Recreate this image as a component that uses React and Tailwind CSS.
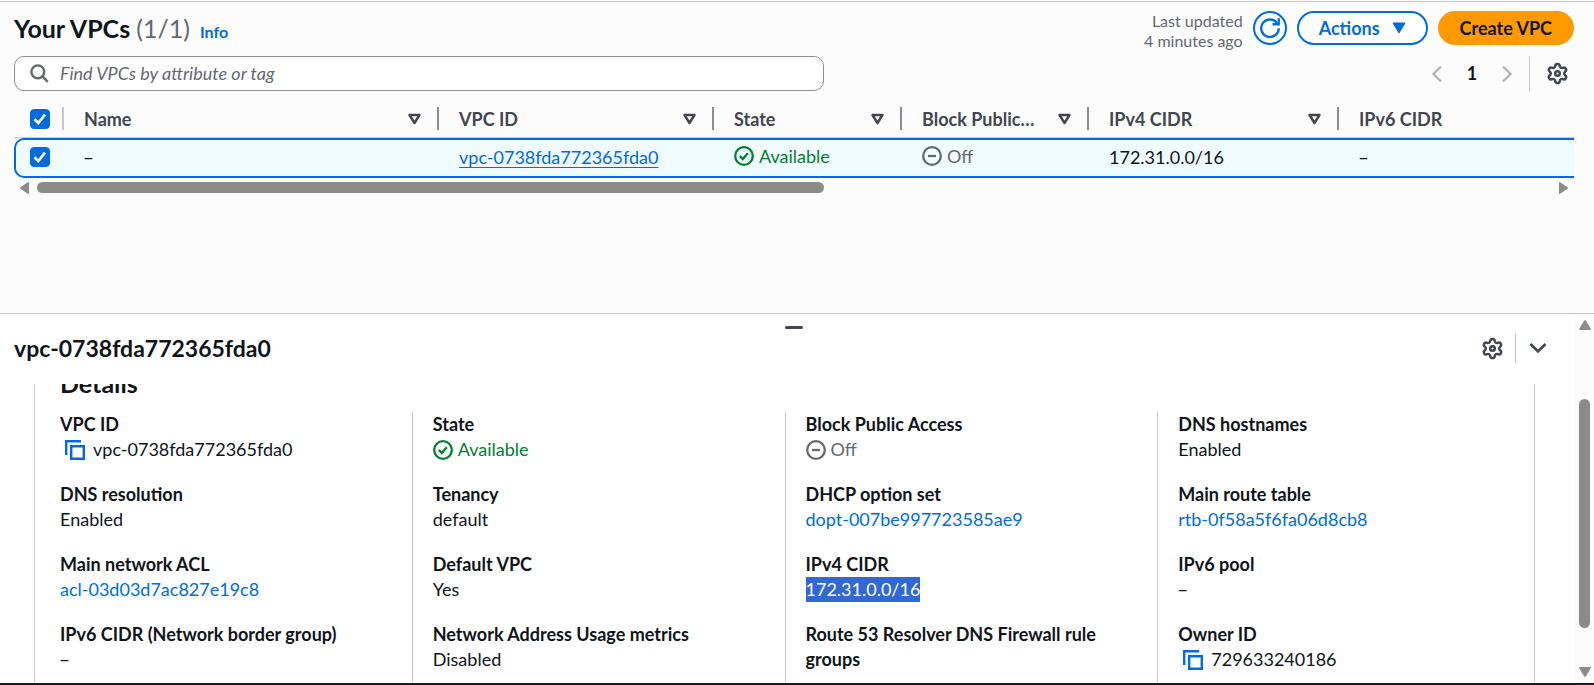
const link = "text-[#006ce0]";

function Tick({ id, label }) {
  return (
    <label htmlFor={id} className="relative block size-5">
      <input
        id={id}
        type="checkbox"
        aria-label={label}
        defaultChecked
        className="peer block size-5 appearance-none rounded border border-[#8c8c94] bg-white checked:border-[#006ce0] checked:bg-[#006ce0]"
      />
      <svg viewBox="0 0 20 20" className="pointer-events-none absolute inset-0 hidden size-5 peer-checked:block" fill="none" stroke="#fff" strokeWidth="2.6">
        <path d="M4.5 10.3 8.3 14l6.7-8.4" />
      </svg>
    </label>
  );
}

function Gear() {
  return (
    <svg width="23" height="23" viewBox="0 0 24 24" fill="none" stroke="#424650" strokeWidth="2.6" strokeLinejoin="round">
      <path d="M9.671 4.136a2.34 2.34 0 0 1 4.659 0 2.34 2.34 0 0 0 3.319 1.915 2.34 2.34 0 0 1 2.33 4.033 2.34 2.34 0 0 0 0 3.831 2.34 2.34 0 0 1-2.33 4.033 2.34 2.34 0 0 0-3.319 1.915 2.34 2.34 0 0 1-4.659 0 2.34 2.34 0 0 0-3.32-1.915 2.34 2.34 0 0 1-2.33-4.033 2.34 2.34 0 0 0 0-3.831A2.34 2.34 0 0 1 6.35 6.051a2.34 2.34 0 0 0 3.319-1.915" />
      <circle cx="12" cy="12" r="2.4" />
    </svg>
  );
}

function SortIcon() {
  return (
    <svg width="13" height="12" viewBox="0 0 13 12" fill="none" stroke="#424650" strokeWidth="2.4" strokeLinejoin="round">
      <path d="M1.500 2h10L6.500 10z" />
    </svg>
  );
}

function Dash() {
  return <span className="font-['Open_Sans',sans-serif]">–</span>;
}

function Available() {
  return (
    <span className="inline-flex items-center gap-[5px] text-[#00802f]">
      <svg width="20" height="20" viewBox="0 0 20 20" fill="none" stroke="currentColor" strokeWidth="2.3">
        <circle cx="10" cy="10" r="8.8" />
        <path d="m5.8 10 3 3 5-5.8" />
      </svg>
      Available
    </span>
  );
}

function Off() {
  return (
    <span className="inline-flex items-center gap-[5px] text-[#656871]">
      <svg width="20" height="20" viewBox="0 0 20 20" fill="none" stroke="currentColor" strokeWidth="2.3">
        <circle cx="10" cy="10" r="8.8" />
        <path d="M6 10h8" />
      </svg>
      Off
    </span>
  );
}

function Copyable({ children }) {
  return (
    <span className="inline-flex items-center gap-2 pl-[5px]">
      <button type="button" aria-label="Copy">
        <svg width="20" height="20" viewBox="0 0 20 20" fill="none" stroke="#006ce0" strokeWidth="2.4">
          <path d="M1.200 15V1.200H16" />
          <path d="M6.200 6.200h12.600v12.600H6.200z" />
        </svg>
      </button>
      {children}
    </span>
  );
}

function Header({ label, last }) {
  return (
    <th className="h-[37px] border-b border-[#c6c6cd] p-0 pb-px text-left font-bold text-[#424650]">
      <div className="flex items-center">
        <span className="grow pl-5 whitespace-nowrap">{label}</span>
        {!last && (
          <>
            <button type="button" aria-label={"Sort by " + label} className="mr-4 shrink-0">
              <SortIcon />
            </button>
            <span className="h-[23px] w-0.5 shrink-0 bg-[#8c8c94]" />
          </>
        )}
      </div>
    </th>
  );
}

const columns = ["Name", "VPC ID", "State", "Block Public…", "IPv4 CIDR", "IPv6 CIDR"];
const cell = "h-10 border-y-2 border-[#006ce0] bg-[#f0fbff] p-0 pb-0.5 pl-5 align-middle whitespace-nowrap";

const details = [
  [
    ["VPC ID", <Copyable>vpc-0738fda772365fda0</Copyable>],
    ["DNS resolution", "Enabled"],
    ["Main network ACL", <a href="#acl" className={link}>acl-03d03d7ac827e19c8</a>],
    ["IPv6 CIDR (Network border group)", <Dash />],
  ],
  [
    ["State", <Available />],
    ["Tenancy", "default"],
    ["Default VPC", "Yes"],
    ["Network Address Usage metrics", "Disabled"],
  ],
  [
    ["Block Public Access", <Off />],
    ["DHCP option set", <a href="#dopt" className={link}>dopt-007be997723585ae9</a>],
    ["IPv4 CIDR", <span className="inline-block bg-[#3367d1] text-white">172.31.0.0/16</span>],
    ["Route 53 Resolver DNS Firewall rule groups", null],
  ],
  [
    ["DNS hostnames", "Enabled"],
    ["Main route table", <a href="#rtb" className={link}>rtb-0f58a5f6fa06d8cb8</a>],
    ["IPv6 pool", <Dash />],
    ["Owner ID", <Copyable>729633240186</Copyable>],
  ],
];

function VpcList() {
  return (
    <section className="border-t border-[#c6c6cd] bg-[#fcfcfc] pt-[9px] pr-5 pb-[120px] pl-3.5">
      <header className="flex items-start justify-between">
        <div className="flex items-baseline pt-[3px]">
          <h1 className="text-[25px] leading-7 font-bold">
            Your VPCs <span className="font-normal text-[#656871]">(1/1)</span>
          </h1>
          <a href="#info" className="ml-2.5 text-[16px] leading-5 font-bold text-[#006ce0]">Info</a>
        </div>
        <div className="flex items-start gap-2.5">
          <p className="text-right text-[16px] leading-5 text-[#656871]">
            Last updated
            <br />4 minutes ago
          </p>
          <button type="button" aria-label="Refresh" className="flex size-[34px] items-center justify-center rounded-full border-2 border-[#006ce0] bg-white">
            <svg width="20" height="20" viewBox="0 0 16 16" fill="none" stroke="#006ce0" strokeWidth="1.9">
              <path d="M15 8.2A7 7 0 1 1 13.6 4" />
              <path d="M10 5h5V.2" />
            </svg>
          </button>
          <button type="button" className="flex h-[34px] items-center gap-3 rounded-full border-2 border-[#006ce0] bg-white px-5 font-bold text-[#006ce0]">
            Actions
            <svg width="14" height="12" viewBox="0 0 14 12" fill="currentColor" stroke="currentColor" strokeLinejoin="round">
              <path d="M1 1h12L7 11z" />
            </svg>
          </button>
          <button type="button" className="h-[34px] rounded-full bg-[#ff9900] px-[22px] font-bold">Create VPC</button>
        </div>
      </header>

      <div className="mt-[5px] flex items-center justify-between">
        <div className="flex h-[35px] w-[51.9%] items-center gap-[11px] rounded-[10px] border border-[#8c8c94] bg-white pl-[15px]">
          <svg width="19" height="19" viewBox="0 0 19 19" fill="none" stroke="#656871" strokeWidth="2.4">
            <circle cx="7.8" cy="7.8" r="6.4" />
            <path d="m12.4 12.4 5.4 5.4" />
          </svg>
          <input type="search" aria-label="Find VPCs" placeholder="Find VPCs by attribute or tag" className="min-w-0 grow bg-transparent outline-none placeholder:text-[#656871] placeholder:italic" />
        </div>
        <nav aria-label="Pages" className="flex items-center">
          <button type="button" aria-label="Previous page">
            <svg width="12" height="18" viewBox="0 0 12 18" fill="none" stroke="#b4b4bb" strokeWidth="2.4"><path d="M10 1.500 2.500 9l7.500 7.500" /></svg>
          </button>
          <button type="button" className="w-[58px] text-center font-bold">1</button>
          <button type="button" aria-label="Next page">
            <svg width="12" height="18" viewBox="0 0 12 18" fill="none" stroke="#b4b4bb" strokeWidth="2.4"><path d="M2 1.500 9.500 9 2 16.500" /></svg>
          </button>
          <span className="mr-4 ml-4 h-[34px] w-px bg-[#c6c6cd]" />
          <button type="button" aria-label="Preferences" className="mr-[5px]">
            <Gear />
          </button>
        </nav>
      </div>

      <div className="mt-2.5 overflow-hidden">
        <table className="w-full min-w-[1500px] table-fixed border-separate border-spacing-0 leading-6">
          <colgroup>
            <col className="w-[50px]" />
            <col className="w-[375px]" />
            <col className="w-[275px]" />
            <col className="w-[188px]" />
            <col className="w-[187px]" />
            <col className="w-[250px]" />
            <col />
          </colgroup>
          <thead>
            <tr>
              <th className="h-[37px] border-b border-[#c6c6cd] p-0 pb-px pl-4">
                <div className="flex items-center justify-between">
                  <Tick id="all" label="Select all VPCs" />
                  <span className="h-[23px] w-0.5 bg-[#c6c6cd]" />
                </div>
              </th>
              {columns.map((c) => (
                <Header key={c} label={c} last={c === "IPv6 CIDR"} />
              ))}
            </tr>
          </thead>
          <tbody>
            <tr>
              <td className="h-10 rounded-l-[10px] border-y-2 border-l-2 border-[#006ce0] bg-[#f0fbff] p-0 pb-0.5 pl-3.5 align-middle">
                <Tick id="row" label="Select vpc-0738fda772365fda0" />
              </td>
              <td className={cell}><Dash /></td>
              <td className={cell}>
                <a href="#vpc" className="text-[#006ce0] underline underline-offset-3">vpc-0738fda772365fda0</a>
              </td>
              <td className={cell}><Available /></td>
              <td className={cell}><Off /></td>
              <td className={cell}>172.31.0.0/16</td>
              <td className={cell}><Dash /></td>
            </tr>
          </tbody>
        </table>
      </div>

      <div className="mt-1 flex h-[11px] items-center gap-2 pr-1.5 pl-1.5">
        <svg width="9" height="12" viewBox="0 0 9 12" fill="#8b8b8b"><path d="M9 .8v10.4q0 .8-.8.8L.4 6.8Q-.2 6 .4 5.2L8.2 0q.8 0 .8.8z" /></svg>
        <div className="grow">
          <div className="h-[11px] w-[52%] rounded-full bg-[#8b8b8b]" />
        </div>
        <svg width="9" height="12" viewBox="0 0 9 12" fill="#8b8b8b"><path d="M0 .8v10.4q0 .8.8.8l7.8-5.2q.6-.8 0-1.6L.8 0Q0 0 0 .8z" /></svg>
      </div>
    </section>
  );
}

function SplitPanel() {
  return (
    <section className="flex min-h-0 grow border-t border-b-2 border-t-[#c6c6cd] border-b-[#161d2a] bg-white">
      <div className="flex min-w-0 grow flex-col">
        <div className="flex justify-center pt-3 pl-[13px]">
          <button type="button" aria-label="Resize panel" className="h-[3px] w-[18px] rounded-sm bg-[#424650]" />
        </div>
        <header className="flex items-center justify-between pt-0.5 pr-7 pl-3.5">
          <h2 className="text-[23px] leading-[34px] font-bold">vpc-0738fda772365fda0</h2>
          <div className="flex items-center">
            <button type="button" aria-label="Panel preferences">
              <Gear />
            </button>
            <span className="mr-[13px] ml-[11px] h-[29px] w-px bg-[#c6c6cd]" />
            <button type="button" aria-label="Close panel">
              <svg width="18" height="12" viewBox="0 0 18 12" fill="none" stroke="#424650" strokeWidth="2.6"><path d="m1.500 2 7.500 7.500L16.500 2" /></svg>
            </button>
          </div>
        </header>
        <div className="mt-[19px] mr-10 mb-px ml-[34px] min-h-0 grow overflow-hidden border-x border-[#c6c6cd] px-1">
          <h3 className="-mt-[15px] mb-[15px] pl-[21px] text-[25px] leading-7 font-bold">Details</h3>
          <div className="grid h-full grid-cols-4">
            {details.map((group, i) => (
              <dl key={i} className={"space-y-5 border-l pr-5 pl-5 leading-[25px] " + (i ? "border-[#c6c6cd]" : "border-transparent")}>
                {group.map(([term, value]) => (
                  <div key={term}>
                    <dt className="font-bold">{term}</dt>
                    <dd className="h-[25px]">{value}</dd>
                  </div>
                ))}
              </dl>
            ))}
          </div>
        </div>
      </div>
      <div className="flex w-[19px] shrink-0 flex-col items-center gap-[3px] bg-[#fcfcfc] py-1.5">
        <svg width="12" height="10" viewBox="0 0 12 10" fill="#8b8b8b"><path d="M.8 10h10.400q.8 0 .8-.8L6.800.6Q6 0 5.200.6L0 9.200q0 .8.8.8z" /></svg>
        <div className="flex w-[11px] grow flex-col">
          <div className="h-[20%]" />
          <div className="h-[69%] rounded-full bg-[#8b8b8b]" />
        </div>
        <svg width="12" height="10" viewBox="0 0 12 10" fill="#8b8b8b"><path d="M.8 0h10.400q.8 0 .8.8L6.800 9.400q-.8.6-1.600 0L0 .8Q0 0 .8 0z" /></svg>
      </div>
    </section>
  );
}

export default function App() {
  return (
    <main className="flex h-screen flex-col overflow-hidden bg-[#fcfcfc] pt-px font-['Lato','Open_Sans',sans-serif] text-[18px] text-[#0f141a]">
      <VpcList />
      <SplitPanel />
    </main>
  );
}
